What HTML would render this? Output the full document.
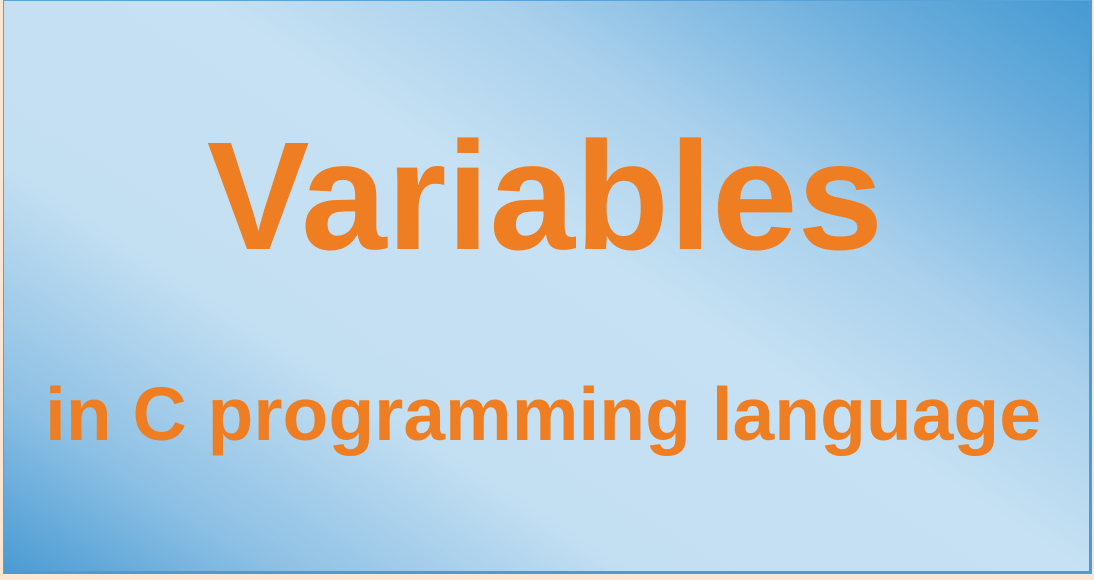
<!DOCTYPE html>
<html><head><style>
html,body{margin:0;padding:0;}
body{width:1094px;height:580px;position:relative;overflow:hidden;background:#fbe5d3;}
.box{position:absolute;left:3px;top:0;width:1085px;height:570px;border:1px solid #5aa3d8;border-bottom:3px solid #4e9ad3;border-right:3px solid #4e9ad3;
background:linear-gradient(33deg,#4a9bd3 0%,#8dc0e4 14%,#c3dff2 32%,#c6e1f3 55%,#a9d0ec 70%,#6aaddc 88%,#459ad2 100%);}
.t{position:absolute;left:0;width:1094px;text-align:center;font-family:"Liberation Sans",sans-serif;font-weight:bold;color:#ef7d22;white-space:nowrap;}
</style></head><body>
<div class="box"></div>
<div class="t" style="top:106px;left:-2px;font-size:154px;line-height:180px;">Variables</div>
<div class="t" style="top:369px;left:-4px;font-size:75px;line-height:90px;">in C programming language</div>
</body></html>
